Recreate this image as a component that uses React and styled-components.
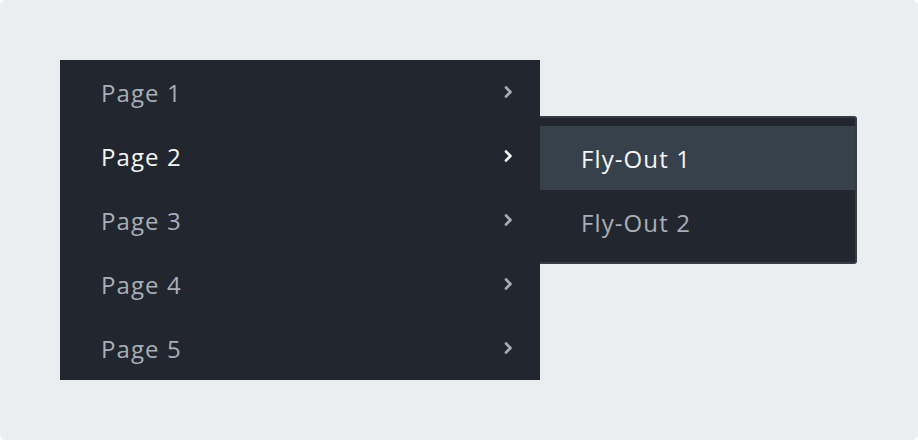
import React from "react";
import styled, { createGlobalStyle } from "styled-components";

const Global = createGlobalStyle`
  html, body { margin: 0; padding: 0; background: #ffffff; }
  body { font-family: "Open Sans", "Noto Sans", sans-serif; }
`;

const Page = styled.div`
  width: 918px;
  height: 440px;
  box-sizing: border-box;
  background: #ebeef1;
  border-radius: 6px;
  padding: 60px 0 0 60px;
`;

const Menu = styled.ul`
  list-style: none;
  margin: 0;
  padding: 0;
  width: 480px;
  background: #22262e;
`;

const Item = styled.li`
  position: relative;
  height: 64px;
  display: flex;
  align-items: center;
  justify-content: space-between;
  padding: 0 27px 0 41px;
  box-sizing: border-box;
  font-size: 24px;
  letter-spacing: 1.1px;
  color: ${(p) => (p.$active ? "#f4f6f8" : "#a9aeb8")};
`;

const Label = styled.span`
  margin-top: 1px;
`;

const Chevron = styled.svg`
  width: 9px;
  height: 14px;
  flex: none;
`;

const Flyout = styled.ul`
  position: absolute;
  left: 100%;
  top: -8px;
  margin: 0;
  list-style: none;
  width: 317px;
  box-sizing: border-box;
  padding: 8px 0;
  background: #22262e;
  border: 2px solid #343c46;
  border-left: 0;
  border-radius: 0 3px 3px 0;
`;

const FlyItem = styled.li`
  height: 64px;
  display: flex;
  align-items: center;
  padding-left: 41px;
  font-size: 24px;
  letter-spacing: 1.1px;
  background: ${(p) => (p.$active ? "#37414b" : "transparent")};
  color: ${(p) => (p.$active ? "#f4f6f8" : "#a9aeb8")};
`;

const ChevronIcon = ({ color }) => (
  <Chevron viewBox="0 0 9 14">
    <path d="M2 2.5 L6.5 7 L2 11.5" fill="none" stroke={color} strokeWidth="2.6" strokeLinecap="round" strokeLinejoin="round" />
  </Chevron>
);

const pages = ["Page 1", "Page 2", "Page 3", "Page 4", "Page 5"];

export default function App() {
  return (
    <>
      <Global />
      <Page>
        <Menu>
          {pages.map((p, i) => {
            const active = i === 1;
            return (
              <Item key={p} $active={active}>
                <Label>{p}</Label>
                <ChevronIcon color={active ? "#f4f6f8" : "#a9aeb8"} />
                {active && (
                  <Flyout>
                    <FlyItem $active>Fly-Out 1</FlyItem>
                    <FlyItem>Fly-Out 2</FlyItem>
                  </Flyout>
                )}
              </Item>
            );
          })}
        </Menu>
      </Page>
    </>
  );
}
